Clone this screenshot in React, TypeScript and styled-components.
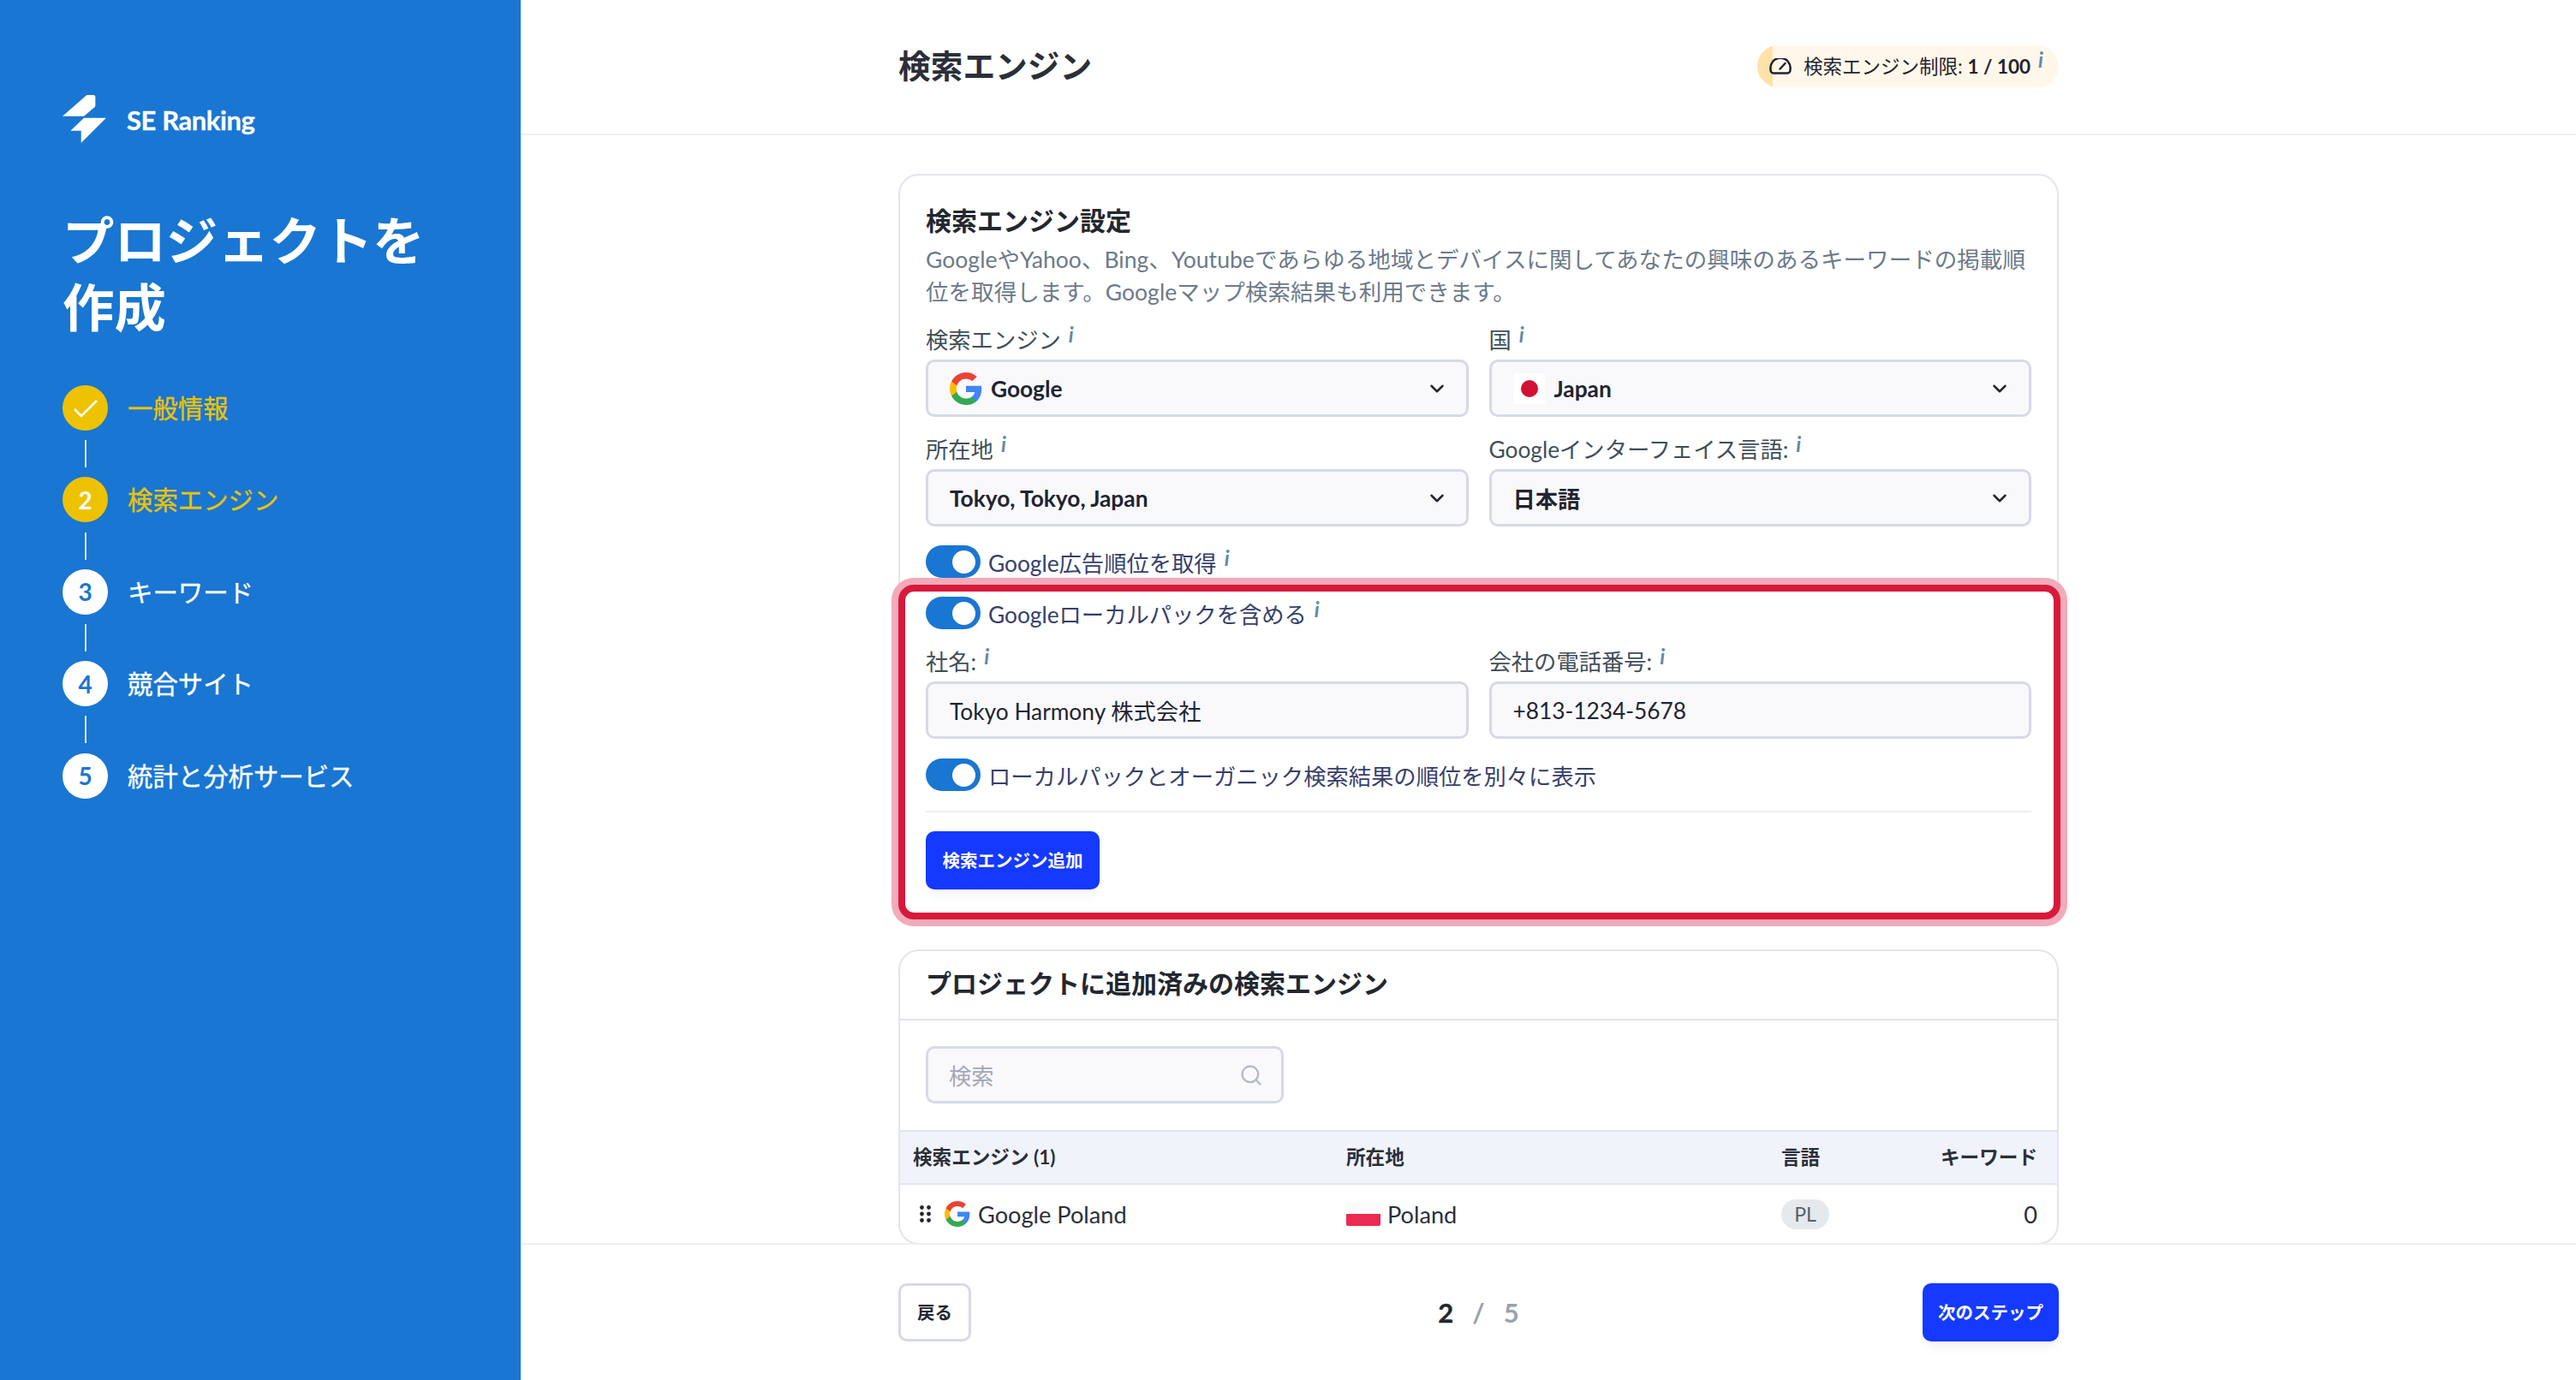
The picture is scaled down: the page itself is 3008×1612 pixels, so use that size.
import React from 'react'
import styled, { createGlobalStyle } from 'styled-components'
import { ChevronDown, Search } from 'lucide-react'

const GlobalStyle = createGlobalStyle`
  html, body {
    margin: 0;
    padding: 0;
    background: #ffffff;
    font-family: Lato, 'Noto Sans CJK JP', sans-serif;
    color: #23272f;
  }
  * {
    box-sizing: border-box;
  }
`

const Page = styled.div`
  display: flex;
  width: 3008px;
  height: 1612px;
  overflow: hidden;
`

const Sidebar = styled.aside`
  flex: 0 0 608px;
  background: #1976d2;
  padding: 111px 0 0 73px;
  color: #ffffff;
`

const LogoRow = styled.div`
  display: flex;
  align-items: center;
  gap: 23px;
  height: 56px;
`

const LogoText = styled.span`
  font-size: 31px;
  font-weight: 700;
  letter-spacing: -0.4px;
  padding-top: 2px;
  -webkit-text-stroke: 0.3px currentColor;
`

const SideTitle = styled.h1`
  margin: 75px 0 52px;
  width: 470px;
  font-size: 60.4px;
  line-height: 78px;
  font-weight: 700;
`

const StepList = styled.ol`
  list-style: none;
  margin: 0;
  padding: 0;
`

const Step = styled.li<{ $on?: boolean }>`
  display: flex;
  align-items: center;
  gap: 23px;
  height: 53px;
  font-size: 29.4px;
  color: ${({ $on }) => ($on ? '#edc200' : '#ffffff')};
`

const StepLabel = styled.span`
  padding-bottom: 3px;
  -webkit-text-stroke: 0.35px currentColor;
`

const StepDot = styled.span<{ $on?: boolean }>`
  display: flex;
  flex: 0 0 53px;
  align-items: center;
  justify-content: center;
  height: 53px;
  border-radius: 50%;
  background: ${({ $on }) => ($on ? '#edc200' : '#ffffff')};
  color: ${({ $on }) => ($on ? '#ffffff' : '#1976d2')};
  font-size: 28px;
  font-weight: 700;
`

const StepLine = styled.div`
  width: 2px;
  height: 32px;
  margin: 11.2px 0 11.2px 26px;
  background: rgba(255, 255, 255, 0.85);
`

const Main = styled.main`
  display: flex;
  flex: 1;
  flex-direction: column;
  min-width: 0;
`

const Header = styled.header`
  flex: 0 0 158px;
  border-bottom: 2px solid #eeeef5;
`

const Column = styled.div`
  width: 1355px;
  margin-left: 441px;
`

const HeaderRow = styled(Column)`
  display: flex;
  align-items: center;
  justify-content: space-between;
  height: 156px;
`

const PageTitle = styled.h2`
  margin: 0;
  padding-bottom: 7px;
  font-size: 37.7px;
  font-weight: 700;
  color: #2b2f38;
`

const LimitChip = styled.div`
  display: flex;
  align-items: center;
  gap: 14px;
  height: 49px;
  margin-bottom: 2px;
  padding: 0 18px 0 14px;
  border-radius: 25px;
  background: linear-gradient(to right, #ffe2a8 18px, #fff8ea 18px);
  font-size: 22.5px;
  color: #1f2430;
`

const ChipText = styled.span`
  padding-bottom: 2px;
`

const ChipCount = styled.b`
  font-weight: 700;
`

const Content = styled.div`
  flex: 1;
  min-height: 0;
  overflow: hidden;
  padding-top: 45px;
`

const Card = styled.section<{ $gap?: number }>`
  border: 2px solid #e2e4f0;
  border-radius: 24px;
  margin-bottom: ${({ $gap }) => $gap ?? 0}px;
  background: #ffffff;
`

const SettingsBody = styled.div`
  padding: 33px 30px 0;
`

const CardTitle = styled.h3`
  margin: 0;
  font-size: 30px;
  line-height: 38px;
  font-weight: 700;
  color: #23272f;
`

const Description = styled.p`
  margin: 8px 0 18px;
  font-size: 26.5px;
  line-height: 38px;
  letter-spacing: 0.05px;
  color: #6c7a89;
`

const FormGrid = styled.div<{ $top?: number }>`
  display: grid;
  grid-template-columns: 1fr 1fr;
  column-gap: 24px;
  row-gap: 19px;
  margin-top: ${({ $top }) => $top ?? 0}px;
`

const FieldLabel = styled.div`
  height: 38px;
  margin-bottom: 4px;
  font-size: 26.3px;
  line-height: 38px;
  color: #3f4f58;
  white-space: nowrap;
`

const Info = styled.i`
  display: inline-block;
  margin-left: 9px;
  font-size: 24px;
  line-height: 0;
  font-weight: 700;
  vertical-align: 7px;
  color: #5f8aa5;
`

const Control = styled.div<{ $strong?: boolean; $muted?: boolean }>`
  display: flex;
  align-items: center;
  height: 67px;
  padding: 0 21px 0 25px;
  border: 3px solid #d7d9e6;
  border-radius: 10px;
  background: #f9f9fc;
  font-size: 26.3px;
  font-weight: ${({ $strong }) => ($strong ? 700 : 400)};
  color: ${({ $muted }) => ($muted ? '#a3a7b4' : '#1f2430')};
`

const ControlText = styled.span`
  flex: 1;
`

const GoogleMark = styled.svg<{ $size: number; $gap: number }>`
  flex: 0 0 ${({ $size }) => $size}px;
  width: ${({ $size }) => $size}px;
  height: ${({ $size }) => $size}px;
  margin-right: ${({ $gap }) => $gap}px;
`

const JapanFlag = styled.span`
  display: flex;
  flex: 0 0 36px;
  align-items: center;
  justify-content: center;
  height: 36px;
  margin: 0 11px 0 1px;
  background: #ffffff;

  &::before {
    content: '';
    width: 20px;
    height: 20px;
    border-radius: 50%;
    background: #d21034;
  }
`

const ToggleRow = styled.div<{ $top: number }>`
  display: flex;
  align-items: center;
  gap: 9px;
  height: 38px;
  margin-top: ${({ $top }) => $top}px;
  font-size: 26.3px;
  color: #36406a;
`

const Toggle = styled.span`
  display: flex;
  flex: 0 0 64px;
  align-items: center;
  justify-content: flex-end;
  height: 38px;
  padding-right: 6px;
  border-radius: 19px;
  background: #1976d2;

  &::after {
    content: '';
    width: 27px;
    height: 27px;
    border-radius: 50%;
    background: #ffffff;
  }
`

const Highlight = styled.div`
  margin: 8px -34px 0 -32px;
  padding: 6px 26px 27px 24px;
  border: 8px solid #d71a3c;
  border-radius: 18px;
  background: #ffffff;
  box-shadow: 0 0 0 8px #f2abb8;
`

const Divider = styled.hr`
  height: 2px;
  margin: 23px 0 22px;
  border: 0;
  background: #eeeef5;
`

const PrimaryButton = styled.button<{ $w: number }>`
  display: block;
  width: ${({ $w }) => $w}px;
  height: 68px;
  padding: 0 0 3px;
  border: 0;
  border-radius: 10px;
  background: #1539ff;
  box-shadow: 0 12px 10px -2px rgba(0, 0, 0, 0.03);
  font-family: inherit;
  font-size: 20.5px;
  font-weight: 700;
  color: #ffffff;
`

const GhostButton = styled.button`
  display: block;
  width: 85px;
  height: 68px;
  padding: 0 0 3px;
  border: 3px solid #d7d9e6;
  border-radius: 10px;
  background: #ffffff;
  font-family: inherit;
  font-size: 20.5px;
  font-weight: 700;
  color: #23272f;
`

const AddedTitle = styled.div`
  height: 81px;
  padding: 0 30px;
  border-bottom: 2px solid #e2e4f0;
  font-size: 30px;
  line-height: 75px;
  font-weight: 700;
  color: #23272f;
`

const SearchBar = styled.div`
  padding: 30px 30px 31px;

  ${Control} {
    width: 418px;
    padding-left: 24px;
  }
`

const TableRow = styled.div<{ $head?: boolean }>`
  display: grid;
  grid-template-columns: 506px 508px 1fr auto;
  align-items: center;
  height: ${({ $head }) => ($head ? 64 : 68)}px;
  padding: ${({ $head }) => ($head ? '0 23px 3px 15px' : '0 23px 0 15px')};
  background: ${({ $head }) => ($head ? '#f1f3fa' : 'transparent')};
  border-top: ${({ $head }) => ($head ? '2px solid #e2e4f0' : '0')};
  border-bottom: ${({ $head }) => ($head ? '2px solid #e2e4f0' : '0')};
  font-size: ${({ $head }) => ($head ? 22.6 : 27.2)}px;
  font-weight: ${({ $head }) => ($head ? 700 : 400)};
  color: #2a2f3a;
`

const EngineCell = styled.div`
  display: flex;
  align-items: center;
`

const DragDots = styled.svg`
  width: 13px;
  height: 20px;
  margin: 0 16px 0 8px;
`

const PolandFlag = styled.span`
  flex: 0 0 40px;
  height: 28px;
  margin-right: 8px;
  border-radius: 2px;
  background: linear-gradient(to bottom, #fbfbfd 50%, #ec2a52 50%);
`

const LangChip = styled.span`
  display: inline-flex;
  align-items: center;
  justify-content: center;
  width: 56px;
  height: 35px;
  border-radius: 18px;
  background: #e4e9ec;
  font-size: 23px;
  color: #52616b;
`

const Footer = styled.footer`
  flex: 0 0 160px;
  border-top: 2px solid #eeeef5;
`

const FooterRow = styled(Column)`
  display: grid;
  grid-template-columns: 1fr auto 1fr;
  align-items: center;
  height: 158px;
`

const Pager = styled.div`
  display: flex;
  gap: 22px;
  font-size: 31px;
  font-weight: 700;
  color: #9aa1ad;
`

const PagerCurrent = styled.span`
  color: #23272f;
  -webkit-text-stroke: 0.4px currentColor;
`

const FooterEnd = styled.div`
  justify-self: end;
`

const steps = [
  { label: '一般情報', on: true, done: true },
  { label: '検索エンジン', on: true },
  { label: 'キーワード' },
  { label: '競合サイト' },
  { label: '統計と分析サービス' },
]

const GoogleIcon = ({ size, gap }: { size: number; gap: number }) => (
  <GoogleMark $size={size} $gap={gap} viewBox="0 0 24 24">
    <path fill="#4285F4" d="M23.49 12.27c0-.79-.07-1.54-.19-2.27H12v4.51h6.47c-.29 1.48-1.14 2.73-2.4 3.58v3h3.86c2.26-2.09 3.56-5.17 3.56-8.82z" />
    <path fill="#34A853" d="M12 24c3.24 0 5.95-1.08 7.93-2.91l-3.86-3c-1.08.72-2.45 1.16-4.07 1.16-3.13 0-5.78-2.11-6.73-4.96H1.29v3.09C3.26 21.3 7.31 24 12 24z" />
    <path fill="#FBBC05" d="M5.27 14.29c-.25-.72-.38-1.49-.38-2.29s.14-1.57.38-2.29V6.62H1.29C.47 8.24 0 10.06 0 12s.47 3.76 1.29 5.38l3.98-3.09z" />
    <path fill="#EA4335" d="M12 4.75c1.77 0 3.35.61 4.6 1.8l3.42-3.42C17.95 1.19 15.24 0 12 0 7.31 0 3.26 2.7 1.29 6.62l3.98 3.09C6.22 6.86 8.87 4.75 12 4.75z" />
  </GoogleMark>
)

const Select = ({ children }: { children: React.ReactNode }) => (
  <Control $strong>
    {children}
    <ChevronDown size={26} strokeWidth={2.3} color="#23272f" />
  </Control>
)

const App = () => (
  <Page>
    <GlobalStyle />
    <Sidebar>
      <LogoRow>
        <svg width="52" height="56" viewBox="0 0 52 56">
          <path fill="#fff" d="M0 24.7 28.3 0H36a2.4 2.4 0 0 1 2.4 2.4V12a3 3 0 0 1-1 2.2L25 24.7z" />
          <path fill="#fff" d="M51 26.7H25L9.3 41.7h12.4V56z" />
        </svg>
        <LogoText>SE Ranking</LogoText>
      </LogoRow>
      <SideTitle>プロジェクトを作成</SideTitle>
      <StepList>
        {steps.map((s, i) => (
          <React.Fragment key={s.label}>
            {i > 0 && <StepLine />}
            <Step $on={s.on}>
              <StepDot $on={s.on}>
                {s.done ? (
                  <svg width="30" height="22" viewBox="0 0 30 22" fill="none">
                    <path d="M2 12l8 8L28 2" stroke="#fff" strokeWidth="2.6" />
                  </svg>
                ) : (
                  i + 1
                )}
              </StepDot>
              <StepLabel>{s.label}</StepLabel>
            </Step>
          </React.Fragment>
        ))}
      </StepList>
    </Sidebar>

    <Main>
      <Header>
        <HeaderRow>
          <PageTitle>検索エンジン</PageTitle>
          <LimitChip>
            <svg width="26" height="19" viewBox="0 0 26 19" fill="none" stroke="#1f2430" strokeWidth="2.5">
              <path d="M5 17.5h16a3.4 3.4 0 0 0 3.4-4A11.6 11.6 0 1 0 1.6 13.5 3.4 3.4 0 0 0 5 17.5z" />
              <path d="M12.5 12.5 18.5 6" strokeLinecap="round" />
            </svg>
            <ChipText>
              検索エンジン制限: <ChipCount>1 / 100</ChipCount>
              <Info>i</Info>
            </ChipText>
          </LimitChip>
        </HeaderRow>
      </Header>

      <Content>
        <Column>
          <Card $gap={33}>
            <SettingsBody>
              <CardTitle>検索エンジン設定</CardTitle>
              <Description>
                GoogleやYahoo、Bing、Youtubeであらゆる地域とデバイスに関してあなたの興味のあるキーワードの掲載順位を取得します。Googleマップ検索結果も利用できます。
              </Description>
              <FormGrid>
                <div>
                  <FieldLabel>
                    検索エンジン<Info>i</Info>
                  </FieldLabel>
                  <Select>
                    <GoogleIcon size={38} gap={10} />
                    <ControlText>Google</ControlText>
                  </Select>
                </div>
                <div>
                  <FieldLabel>
                    国<Info>i</Info>
                  </FieldLabel>
                  <Select>
                    <JapanFlag />
                    <ControlText>Japan</ControlText>
                  </Select>
                </div>
                <div>
                  <FieldLabel>
                    所在地<Info>i</Info>
                  </FieldLabel>
                  <Select>
                    <ControlText>Tokyo, Tokyo, Japan</ControlText>
                  </Select>
                </div>
                <div>
                  <FieldLabel>
                    Googleインターフェイス言語:<Info>i</Info>
                  </FieldLabel>
                  <Select>
                    <ControlText>日本語</ControlText>
                  </Select>
                </div>
              </FormGrid>
              <ToggleRow $top={22}>
                <Toggle />
                <span>
                  Google広告順位を取得<Info>i</Info>
                </span>
              </ToggleRow>
              <Highlight>
                <ToggleRow $top={0}>
                  <Toggle />
                  <span>
                    Googleローカルパックを含める<Info>i</Info>
                  </span>
                </ToggleRow>
                <FormGrid $top={19}>
                  <div>
                    <FieldLabel>
                      社名:<Info>i</Info>
                    </FieldLabel>
                    <Control>Tokyo Harmony 株式会社</Control>
                  </div>
                  <div>
                    <FieldLabel>
                      会社の電話番号:<Info>i</Info>
                    </FieldLabel>
                    <Control>+813-1234-5678</Control>
                  </div>
                </FormGrid>
                <ToggleRow $top={23}>
                  <Toggle />
                  <span>ローカルパックとオーガニック検索結果の順位を別々に表示</span>
                </ToggleRow>
                <Divider />
                <PrimaryButton $w={203}>検索エンジン追加</PrimaryButton>
              </Highlight>
            </SettingsBody>
          </Card>

          <Card>
            <AddedTitle>プロジェクトに追加済みの検索エンジン</AddedTitle>
            <SearchBar>
              <Control $muted>
                <ControlText>検索</ControlText>
                <Search size={28} strokeWidth={2} color="#b4b8c6" />
              </Control>
            </SearchBar>
            <TableRow $head>
              <div>検索エンジン (1)</div>
              <div>所在地</div>
              <div>言語</div>
              <div>キーワード</div>
            </TableRow>
            <TableRow>
              <EngineCell>
                <DragDots viewBox="0 0 13 20">
                  {[2.5, 10, 17.5].map((y) => (
                    <React.Fragment key={y}>
                      <circle cx="2.5" cy={y} r="2.4" fill="#23272f" />
                      <circle cx="10.5" cy={y} r="2.4" fill="#23272f" />
                    </React.Fragment>
                  ))}
                </DragDots>
                <GoogleIcon size={30} gap={9} />
                Google Poland
              </EngineCell>
              <EngineCell>
                <PolandFlag />
                Poland
              </EngineCell>
              <div>
                <LangChip>PL</LangChip>
              </div>
              <div>0</div>
            </TableRow>
          </Card>
        </Column>
      </Content>

      <Footer>
        <FooterRow>
          <div>
            <GhostButton>戻る</GhostButton>
          </div>
          <Pager>
            <PagerCurrent>2</PagerCurrent>
            <span>/</span>
            <span>5</span>
          </Pager>
          <FooterEnd>
            <PrimaryButton $w={159}>次のステップ</PrimaryButton>
          </FooterEnd>
        </FooterRow>
      </Footer>
    </Main>
  </Page>
)

export default App
